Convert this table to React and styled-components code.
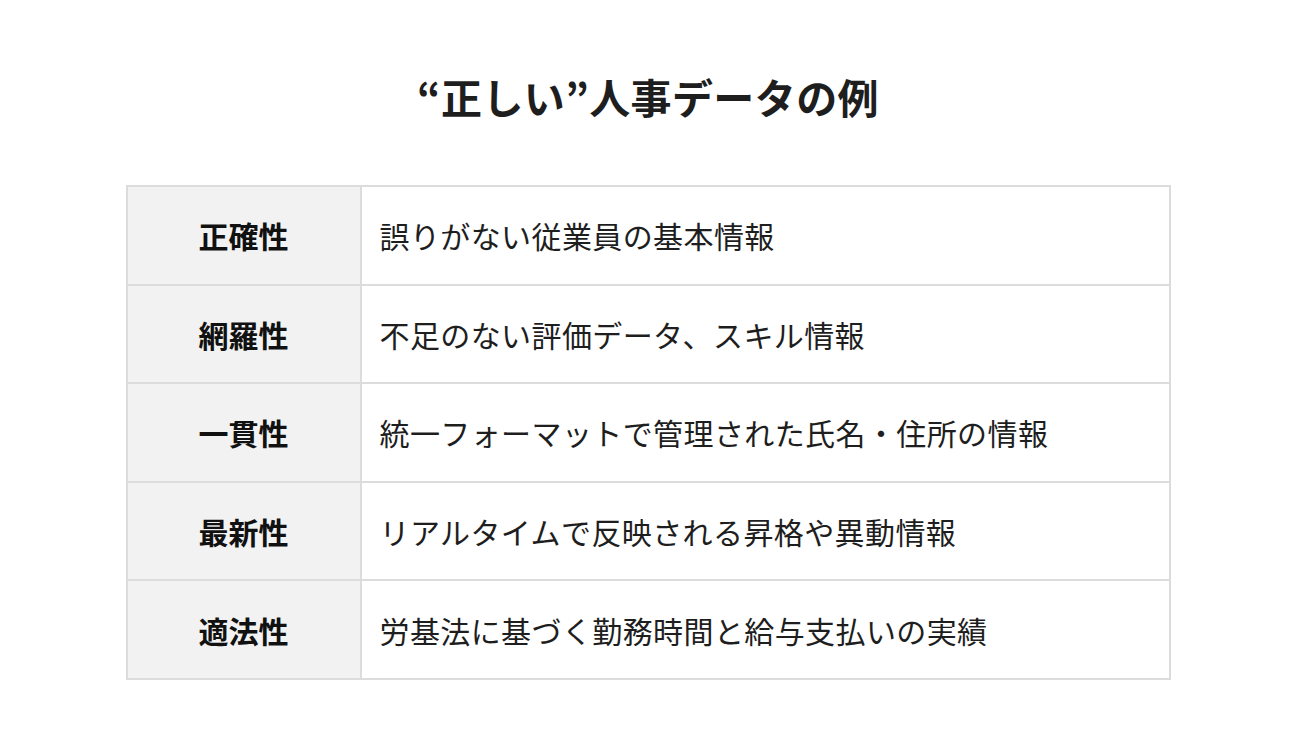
import styled, { createGlobalStyle } from "styled-components";

const GlobalStyle = createGlobalStyle`
    html, body {
        margin: 0;
        padding: 0;
        background: #fff;
    }
    body {
        font-family: "Noto Sans CJK JP", "Noto Sans", sans-serif;
        color: #222;
    }
`

const rows = [
    { label: "正確性", text: "誤りがない従業員の基本情報" },
    { label: "網羅性", text: "不足のない評価データ、スキル情報" },
    { label: "一貫性", text: "統一フォーマットで管理された氏名・住所の情報" },
    { label: "最新性", text: "リアルタイムで反映される昇格や異動情報" },
    { label: "適法性", text: "労基法に基づく勤務時間と給与支払いの実績" },
]

export default function App() {
    return (
        <Page>
            <GlobalStyle />
            <Title>“正しい”人事データの例</Title>
            <Table>
                <tbody>
                    {rows.map((row) => (
                        <tr key={row.label}>
                            <HeadCell>{row.label}</HeadCell>
                            <BodyCell>{row.text}</BodyCell>
                        </tr>
                    ))}
                </tbody>
            </Table>
        </Page>
    )
}

const Page = styled.div`
    width: 1296px;
    height: 731px;
    display: flex;
    flex-direction: column;
    align-items: center;
    box-sizing: border-box;
    padding-top: 68px;
`
const Title = styled.h1`
    margin: 0 0 61px;
    font-size: 41px;
    line-height: 56px;
    font-weight: 700;
    color: #1e1e1e;
    letter-spacing: 0.4px;
`
const Table = styled.table`
    width: 1045px;
    border-collapse: collapse;
    border: 2px solid #dcdcdc;
    & tr {
        height: 98.6px;
    }
`
const HeadCell = styled.th`
    width: 232px;
    padding: 0;
    background: #f2f2f2;
    border: 2px solid #dcdcdc;
    font-size: 30px;
    font-weight: 700;
    text-align: center;
    color: #111;
`
const BodyCell = styled.td`
    padding: 0 18px;
    border: 2px solid #dcdcdc;
    font-size: 30px;
    letter-spacing: 0.4px;
    font-weight: 400;
    color: #1e1e1e;
`
